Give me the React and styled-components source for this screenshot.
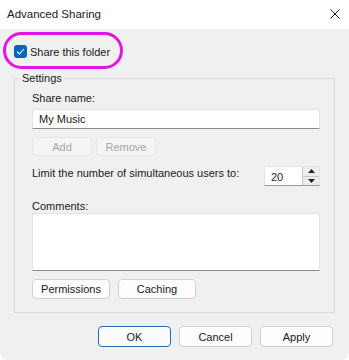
import React from 'react';
import styled, { createGlobalStyle } from 'styled-components';

const GlobalStyle = createGlobalStyle`
    html, body {
        margin: 0;
        padding: 0;
        background: #ffffff;
    }
    body {
        font-family: "Liberation Sans", Arial, sans-serif;
        color: #1a1a1a;
    }
`;

const Window = styled.div`
    position: relative;
    width: 349px;
    height: 360px;
    background: #f0f0f0;
    border-radius: 0 0 8px 8px;
    display: flex;
    flex-direction: column;
    overflow: hidden;
`;

const TitleBar = styled.div`
    height: 29px;
    background: #ffffff;
    display: flex;
    align-items: center;
    justify-content: space-between;
    padding: 0 9px 0 7px;
    flex-shrink: 0;
`;

const Title = styled.span`
    font-size: 11.5px;
    color: #1a1a1a;
    margin-top: -1px;
`;

const CloseIcon = styled.svg`
    width: 10px;
    height: 10px;
    margin-top: -1px;
`;

const Body = styled.div`
    display: flex;
    flex-direction: column;
    padding: 0 14px 0 14px;
`;

const CheckRow = styled.label`
    display: flex;
    align-items: center;
    gap: 3px;
    margin-top: 16px;
    font-size: 11px;
    height: 13px;
`;

const CheckBox = styled.span`
    width: 13px;
    height: 13px;
    border-radius: 3px;
    background: #0067c0;
    display: flex;
    align-items: center;
    justify-content: center;
`;

const Highlight = styled.div`
    position: absolute;
    left: 3px;
    top: 32px;
    width: 120px;
    height: 37px;
    box-sizing: border-box;
    border: 3px solid #e414e4;
    border-radius: 19px;
    pointer-events: none;
`;

const Group = styled.fieldset`
    margin: 13px 0 0 0;
    padding: 0;
    border: 1px solid #dadada;
    min-width: 0;
`;

const Legend = styled.legend`
    font-size: 11px;
    padding: 0 2px;
    margin-left: 5px;
    line-height: 14px;
`;

const GroupContent = styled.div`
    display: flex;
    flex-direction: column;
    padding: 0 14px 13px 17px;
`;

const FieldLabel = styled.div`
    font-size: 11px;
    line-height: 14px;
    margin-top: ${(p) => p.$top || 0}px;
`;

const TextBox = styled.div`
    height: ${(p) => p.$height || 20}px;
    box-sizing: border-box;
    background: #ffffff;
    border: 1px solid #e3e3e3;
    border-bottom-color: #8a8a8a;
    font-size: 11px;
    padding: 3px 6px;
    margin-top: ${(p) => p.$top || 0}px;
`;

const ButtonRow = styled.div`
    display: flex;
    gap: ${(p) => p.$gap || 4}px;
    margin-top: ${(p) => p.$top || 0}px;
`;

const Button = styled.button`
    width: ${(p) => p.$width}px;
    height: ${(p) => p.$height || 20}px;
    box-sizing: border-box;
    font-family: "Liberation Sans", Arial, sans-serif;
    font-size: 11px;
    color: ${(p) => (p.disabled ? '#a5a5a5' : '#1a1a1a')};
    background: ${(p) => (p.disabled ? '#f5f5f5' : '#fdfdfd')};
    border: 1px solid ${(p) => (p.disabled ? '#e6e6e6' : '#d0d0d0')};
    border-radius: 4px;
    padding: 0;
    ${(p) => p.$primary && `
        border: 1.5px solid #1a6fbf;
        background: #fcfcfc;
    `}
`;

const LimitRow = styled.div`
    display: flex;
    justify-content: space-between;
    align-items: flex-start;
    margin-top: 10px;
`;

const LimitText = styled.span`
    font-size: 11px;
    line-height: 14px;
`;

const Spinner = styled.div`
    width: 56px;
    height: 20px;
    box-sizing: border-box;
    background: #ffffff;
    border: 1px solid #e3e3e3;
    border-bottom-color: #9a9a9a;
    display: flex;
    align-items: stretch;
`;

const SpinValue = styled.span`
    flex: 1;
    font-size: 11px;
    padding: 4px 0 0 6px;
`;

const SpinArrows = styled.div`
    width: 16px;
    display: flex;
    flex-direction: column;
    border-left: 1px solid #c8c8c8;
`;

const SpinArrow = styled.div`
    flex: 1;
    display: flex;
    align-items: center;
    justify-content: center;
    background: #ececec;
    border-bottom: ${(p) => (p.$top ? '1px solid #c8c8c8' : 'none')};
`;

const Arrow = ({ up }) => (
    <svg width="7" height="4" viewBox="0 0 7 4">
        <path d={up ? 'M0 4 L3.5 0 L7 4 Z' : 'M0 0 L3.5 4 L7 0 Z'} fill="#222" />
    </svg>
);

const Footer = styled.div`
    display: flex;
    justify-content: flex-end;
    gap: 8px;
    padding: 13px 16px 0 0;
`;

export default function App() {
    return (
        <>
            <GlobalStyle />
            <Window>
                <TitleBar>
                    <Title>Advanced Sharing</Title>
                    <CloseIcon viewBox="0 0 10 10">
                        <path d="M0.5 0.5 L9.5 9.5 M9.5 0.5 L0.5 9.5" stroke="#1a1a1a" strokeWidth="1" />
                    </CloseIcon>
                </TitleBar>
                <Body>
                    <CheckRow>
                        <CheckBox>
                            <svg width="9" height="7" viewBox="0 0 9 7">
                                <path d="M1 3.6 L3.4 6 L8 1" stroke="#ffffff" strokeWidth="1.1" fill="none" />
                            </svg>
                        </CheckBox>
                        Share this folder
                    </CheckRow>
                    <Group>
                        <Legend>Settings</Legend>
                        <GroupContent>
                            <FieldLabel $top={6}>Share name:</FieldLabel>
                            <TextBox $top={4}>My Music</TextBox>
                            <ButtonRow $top={8}>
                                <Button $width={60} $height={19} disabled>Add</Button>
                                <Button $width={60} $height={19} disabled>Remove</Button>
                            </ButtonRow>
                            <LimitRow>
                                <LimitText>Limit the number of simultaneous users to:</LimitText>
                                <Spinner>
                                    <SpinValue>20</SpinValue>
                                    <SpinArrows>
                                        <SpinArrow $top><Arrow up /></SpinArrow>
                                        <SpinArrow><Arrow /></SpinArrow>
                                    </SpinArrows>
                                </Spinner>
                            </LimitRow>
                            <FieldLabel $top={13}>Comments:</FieldLabel>
                            <TextBox $height={58} />
                            <ButtonRow $top={8} $gap={8}>
                                <Button $width={78}>Permissions</Button>
                                <Button $width={78}>Caching</Button>
                            </ButtonRow>
                        </GroupContent>
                    </Group>
                </Body>
                <Footer>
                    <Button $width={73} $height={21} $primary>OK</Button>
                    <Button $width={73} $height={21}>Cancel</Button>
                    <Button $width={73} $height={21}>Apply</Button>
                </Footer>
                <Highlight />
            </Window>
        </>
    );
}
